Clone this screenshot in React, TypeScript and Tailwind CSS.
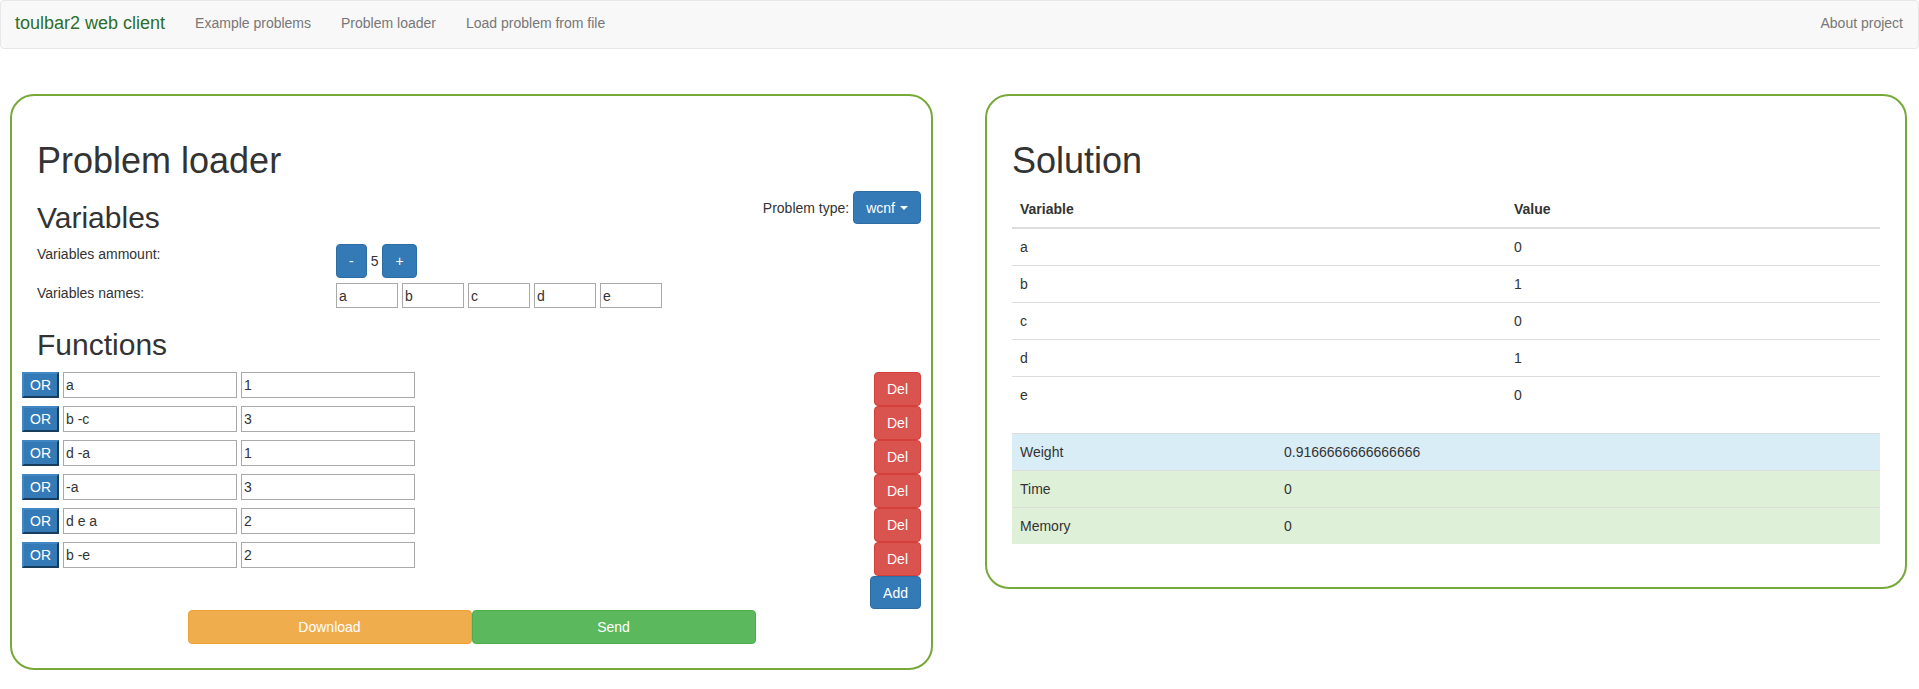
import React from 'react'

const navLinks = ['Example problems', 'Problem loader', 'Load problem from file']
const varNames = ['a', 'b', 'c', 'd', 'e']
const functions = [
  ['a', '1'],
  ['b -c', '3'],
  ['d -a', '1'],
  ['-a', '3'],
  ['d e a', '2'],
  ['b -e', '2'],
]
const solution = [
  ['a', '0'],
  ['b', '1'],
  ['c', '0'],
  ['d', '1'],
  ['e', '0'],
]
const stats = [
  { label: 'Weight', value: '0.9166666666666666', bg: 'bg-[#d9edf7]' },
  { label: 'Time', value: '0', bg: 'bg-[#dff0d8]' },
  { label: 'Memory', value: '0', bg: 'bg-[#dff0d8]' },
]

function BlueButton({ children, className = '' }: { children: React.ReactNode; className?: string }) {
  return (
    <button className={`rounded-[4px] border border-[#2e6da4] bg-[#337ab7] px-3 text-white ${className}`}>
      {children}
    </button>
  )
}

export default function App() {
  return (
    <div className="min-h-screen bg-white font-['Liberation_Sans',Arial,sans-serif] text-[14px] leading-5 text-[#333]">
      {/* navbar */}
      <nav className="flex h-[49px] justify-between rounded-[4px] border border-[#e7e7e7] bg-[#f8f8f8]">
        <div className="flex">
          <a className="pl-[14px] pr-[15px] pt-[12px] text-[18px] leading-5 text-[#2b6f2b]">toulbar2 web client</a>
          {navLinks.map((l) => (
            <a key={l} className="px-[15px] pt-[12px] text-[#777]">
              {l}
            </a>
          ))}
        </div>
        <a className="px-[15px] pt-[12px] text-[#777]">About project</a>
      </nav>

      <div className="mt-[45px] flex items-start gap-[52px] px-[10px]">
        {/* problem loader */}
        <div className="w-[923px] rounded-[24px] border-2 border-[#76a83a] px-[10px] pb-[24px] pt-[45px]">
          <h1 className="px-[15px] text-[36px] leading-[40px]">Problem loader</h1>

          <div className="mt-[10px] flex items-start justify-between">
            <h2 className="mt-[10px] px-[15px] text-[30px] leading-[33px]">Variables</h2>
            <div className="flex items-center gap-[4px]">
              <span>Problem type:</span>
              <BlueButton className="flex h-[33px] items-center gap-[5px]">
                wcnf
                <span className="inline-block border-x-[4px] border-t-[4px] border-x-transparent border-t-white" />
              </BlueButton>
            </div>
          </div>

          <div className="mt-[10px] flex">
            <div className="w-[299px] px-[15px]">Variables ammount:</div>
            <div className="flex items-center px-[15px]">
              <BlueButton className="h-[34px]">-</BlueButton>
              <span className="px-[4px]">5</span>
              <BlueButton className="h-[34px]">+</BlueButton>
            </div>
          </div>
          <div className="mt-[5px] flex">
            <div className="w-[299px] px-[15px]">Variables names:</div>
            <div className="flex gap-[4px] px-[15px]">
              {varNames.map((n) => (
                <input
                  key={n}
                  readOnly
                  value={n}
                  className="h-[25px] w-[62px] border border-[#a9a9a9] px-[2px] text-[14px] text-[#333] outline-none"
                />
              ))}
            </div>
          </div>

          <h2 className="mb-[11px] mt-[20px] px-[15px] text-[30px] leading-[33px]">Functions</h2>

          {functions.map(([expr, w], i) => (
            <div key={i} className="flex h-[34px] items-start justify-between">
              <div className="flex gap-[4px]">
                <button className="h-[26px] w-[37px] border-2 border-b-[#183c5c] border-l-[#4187c4] border-r-[#183c5c] border-t-[#4187c4] bg-[#337ab7] text-[14px] text-white">
                  OR
                </button>
                <input
                  readOnly
                  value={expr}
                  className="h-[26px] w-[174px] border border-[#a9a9a9] px-[2px] text-[14px] text-[#333] outline-none"
                />
                <input
                  readOnly
                  value={w}
                  className="h-[26px] w-[174px] border border-[#a9a9a9] px-[2px] text-[14px] text-[#333] outline-none"
                />
              </div>
              <button className="h-[34px] rounded-[4px] border border-[#d43f3a] bg-[#d9534f] px-3 text-white">Del</button>
            </div>
          ))}

          <div className="flex justify-end">
            <BlueButton className="h-[33px]">Add</BlueButton>
          </div>

          <div className="mt-[1px] flex justify-center">
            <button className="h-[34px] w-[284px] rounded-[4px] border border-[#eea236] bg-[#f0ad4e] text-white">
              Download
            </button>
            <button className="h-[34px] w-[284px] rounded-[4px] border border-[#4cae4c] bg-[#5cb85c] text-white">
              Send
            </button>
          </div>
        </div>

        {/* solution */}
        <div className="w-[922px] rounded-[24px] border-2 border-[#76a83a] px-[10px] pb-[43px] pt-[45px]">
          <h1 className="px-[15px] text-[36px] leading-[40px]">Solution</h1>

          <div className="mx-[15px] mt-[10px]">
            <div className="flex border-b-2 border-[#ddd] font-bold">
              <div className="w-[494px] p-2">Variable</div>
              <div className="flex-1 p-2">Value</div>
            </div>
            {solution.map(([v, val], i) => (
              <div key={v} className={`flex ${i > 0 ? 'border-t border-[#ddd]' : ''}`}>
                <div className="w-[494px] p-2">{v}</div>
                <div className="flex-1 p-2">{val}</div>
              </div>
            ))}
          </div>

          <div className="mx-[15px] mt-[20px]">
            {stats.map((s) => (
              <div key={s.label} className={`flex border-t border-[#ddd] ${s.bg}`}>
                <div className="w-[264px] p-2">{s.label}</div>
                <div className="flex-1 p-2">{s.value}</div>
              </div>
            ))}
          </div>
        </div>
      </div>
    </div>
  )
}
